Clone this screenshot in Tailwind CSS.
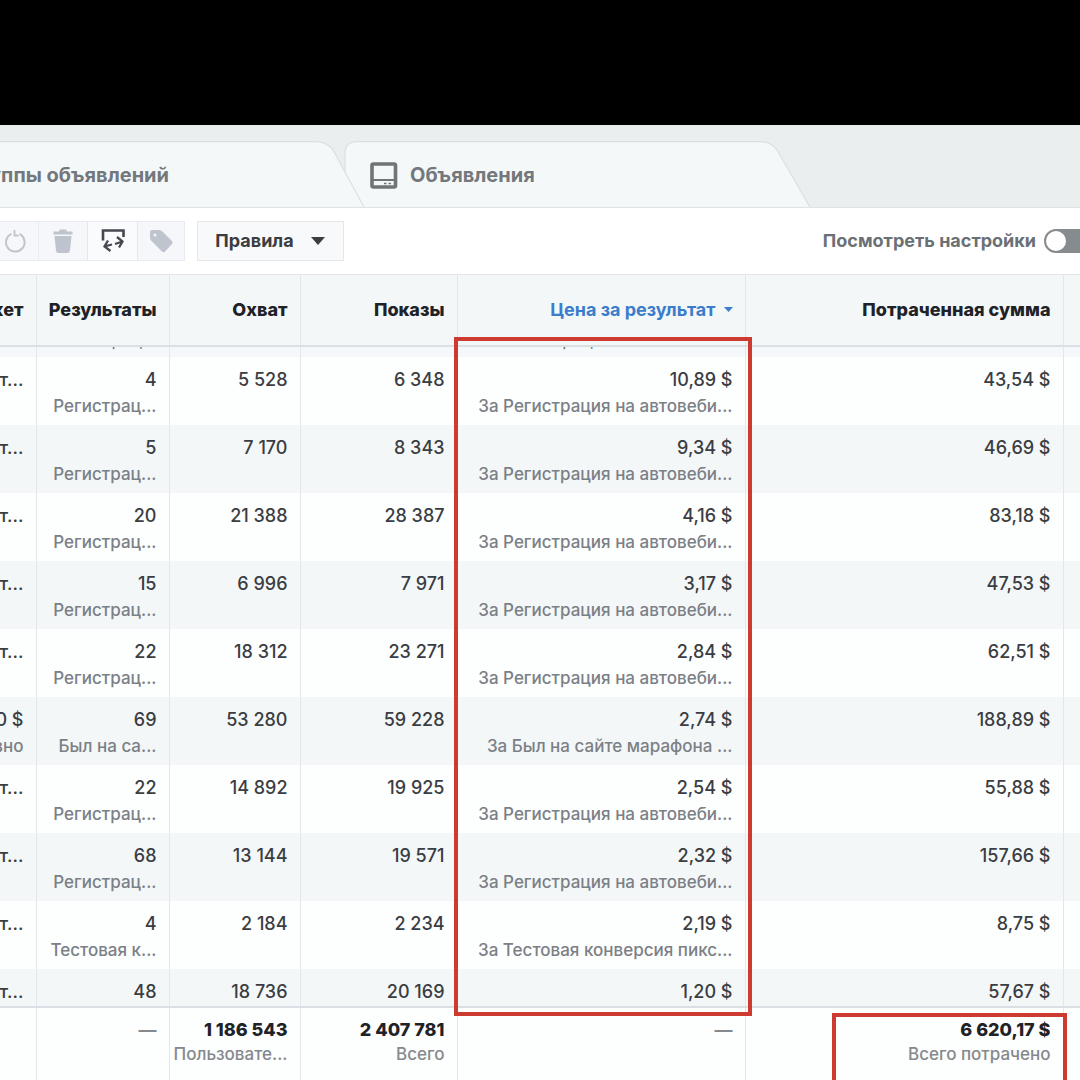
<!DOCTYPE html>
<html lang="ru">
<head>
<meta charset="utf-8">
<meta name="viewport" content="width=device-width, initial-scale=1">
<title>Ads Manager</title>
<script src="https://cdn.jsdelivr.net/npm/@tailwindcss/browser@4"></script>
</head>
<body class="min-h-screen overflow-hidden bg-white font-['Inter','Liberation_Sans',sans-serif] text-[#3a3d42]">
<div class="h-[125px] bg-black"></div>

<nav class="relative flex h-[83px] items-end border-b border-[#dfe3e6] bg-[#eaeeef]">
  <svg class="absolute bottom-0 left-0 h-[66px] w-[812px]" viewBox="0 0 812 66" fill="#f5f8f9" stroke="#dbdfe1" stroke-width="1.2" aria-hidden="true">
    <path d="M345 66V12Q345 .6 357 .6H760Q771 .6 777 9L810 66"/>
    <path d="M-2 66V.6H315Q327 .6 333 9L364 66"/>
  </svg>
  <a href="#" class="relative flex h-16 w-[370px] items-center"><span class="flex w-[169px] justify-end overflow-hidden text-xl font-bold whitespace-nowrap text-[#73787d]">Группы объявлений</span></a>
  <a href="#" class="relative flex h-16 items-center gap-3 text-xl font-bold text-[#73787d]">
    <svg class="h-7 w-7" viewBox="0 0 28 28" fill="none" stroke="#6f7477" stroke-width="3.600" aria-hidden="true"><rect x="2" y="3" width="23.500" height="23" rx="1.500"/><path d="M2 19H25" stroke-width="2"/><path d="M14 22.500H16.500M18.500 22.500H21" stroke-width="1.500"/></svg>
    Объявления
  </a>
</nav>

<div class="flex h-[66px] items-center justify-between overflow-hidden">
  <div class="flex items-center gap-3">
    <div class="flex h-10 border-y border-r border-[#e8ebef] bg-[#f5f7fa]">
      <button class="flex w-[38px] items-center justify-center pr-2" aria-label="Обновить"><svg class="h-7 w-7" viewBox="0 0 28 28" fill="none" stroke="#c0c4cd" stroke-width="2"><path d="M10.500 6.800A9.300 9.300 0 1 0 18.500 7"/><path d="M13.500 3V8.500H17.500" stroke-width="1.800"/></svg></button>
      <button class="flex w-[49px] items-center justify-center border-l border-[#e8ebef]" aria-label="Удалить"><svg class="h-7 w-7" viewBox="0 0 28 28" fill="#bfc3cd"><path d="M11 2.500H17L18 4.500H23.500V7.500H4.500V4.500H10ZM5.500 9H22.500L21 23.500Q20.800 26 18.500 26H9.500Q7.200 26 7 23.500Z"/></svg></button>
      <button class="flex w-[51px] items-center justify-center border-x border-[#e3e6ea] bg-[#fafbfc]" aria-label="Сравнить"><svg class="h-7 w-7" viewBox="0 0 28 28" fill="none" stroke="#45494f" stroke-width="2.600"><path d="M4 13.500V3.500H24.500V10"/><path d="M9 13.500L5.500 19.500L11.500 24M5.500 19.500L13 17.500M18 10L23.500 14.500L20 20.500M23.500 14.500L16 17" stroke-width="2.300"/></svg></button>
      <button class="flex w-[46px] items-center justify-center" aria-label="Метка"><svg class="h-7 w-7" viewBox="0 0 28 28"><path d="M3 5Q3 3 5 3H12Q14 3 15.500 4.500L25 14Q26.500 15.500 25 17L18 24.500Q16.500 26 15 24.500L5 14.500Q3 12.500 3 11Z" fill="#bfc4cf"/><circle cx="8" cy="8" r="1.500" fill="#f5f7fa"/></svg></button>
    </div>
    <button class="flex h-10 w-[147px] items-center justify-center gap-4 border border-[#e5e8eb] bg-[#f7f9fa] text-lg font-bold">Правила
      <svg class="h-2 w-4" viewBox="0 0 16 8" fill="#3a3d42" aria-hidden="true"><path d="M1 0H15L8 8Z"/></svg>
    </button>
  </div>
  <label class="-mr-3 flex items-center gap-2 text-lg font-bold text-[#6b7075]">Посмотреть настройки
    <input type="checkbox" role="switch" class="peer sr-only">
    <span class="flex h-6 w-12 items-center rounded-full border-2 border-[#868b8e] bg-[#868b8e]"><span class="h-5 w-5 rounded-full bg-white"></span></span>
  </label>
</div>

<div class="relative">
<table class="w-full table-fixed border-collapse text-right text-lg whitespace-nowrap">
  <colgroup><col class="w-[36px]"><col class="w-[133px]"><col class="w-[131px]"><col class="w-[157px]"><col class="w-[288px]"><col class="w-[318px]"><col></colgroup>
  <thead class="text-[#1f2227]">
    <tr id="head" class="h-[71px] border-t border-b-2 border-t-[#e2e6e9] border-b-[#dadfe4] bg-[#f4f7f8]"></tr>
  </thead>
  <tbody id="rows"></tbody>
  <tfoot id="totals" class="border-t-2 border-[#dadfe4] bg-[#fdfefe]"></tfoot>
</table>
<div class="pointer-events-none absolute top-[63px] left-[454px] h-[679px] w-[298px] border-4 border-[#cd3a30]"></div>
<div class="pointer-events-none absolute top-[739px] left-[832px] h-[72px] w-[235px] border-4 border-[#cd3a30]"></div>
</div>

<script>
const cell = 'border-r border-[#e3e7ec] p-0 pr-3 align-top';
const last = '<td class="p-0"></td>';
const line = (text, cls) => `<div class="flex justify-end overflow-hidden ${cls}"><span>${text}</span></div>`;

const heads = ['Бюджет', 'Результаты', 'Охват', 'Показы', 'Цена за результат', 'Потраченная сумма'];
document.getElementById('head').innerHTML = heads.map((h, i) => i === 4
  ? `<th scope="col" class="border-r border-[#e3e7ec] p-0 pr-3 font-bold text-[#3b7dcb]"><div class="flex items-center justify-end gap-2">${h}<svg class="h-[5px] w-[9px]" viewBox="0 0 9 5" fill="#3b7dcb"><path d="M0 0H9L4.500 5Z"/></svg></div></th>`
  : `<th scope="col" class="border-r border-[#e3e7ec] p-0 pr-3 font-extrabold">${line(h, '')}</th>`).join('') + '<th class="p-0"></th>';

const reg = 'Регистрац...', cost = 'За Регистрация на автовеби...', set = 'Использует...';
const data = [
  [set, '', '4', reg, '5 528', '6 348', '10,89 $', cost, '43,54 $'],
  [set, '', '5', reg, '7 170', '8 343', '9,34 $', cost, '46,69 $'],
  [set, '', '20', reg, '21 388', '28 387', '4,16 $', cost, '83,18 $'],
  [set, '', '15', reg, '6 996', '7 971', '3,17 $', cost, '47,53 $'],
  [set, '', '22', reg, '18 312', '23 271', '2,84 $', cost, '62,51 $'],
  ['10,00 $', 'Ежедневно', '69', 'Был на са...', '53 280', '59 228', '2,74 $', 'За Был на сайте марафона ...', '188,89 $'],
  [set, '', '22', reg, '14 892', '19 925', '2,54 $', cost, '55,88 $'],
  [set, '', '68', reg, '13 144', '19 571', '2,32 $', cost, '157,66 $'],
  [set, '', '4', 'Тестовая к...', '2 184', '2 234', '2,19 $', 'За Тестовая конверсия пикс...', '8,75 $'],
  [set, '', '48', '', '18 736', '20 169', '1,20 $', '', '57,67 $'],
];
const pair = (a, b) => `<td class="${cell}">${line(a, 'h-[26px] leading-[26px] font-medium')}${b ? line(b, 'h-[26px] text-[17px] leading-[26px] font-medium text-[#7b8086]') : ''}</td>`;
const clipped = t => `<td class="${cell}"><div class="flex h-[5px] items-end justify-end overflow-hidden text-[17px] leading-6 text-[#74797f]">${t}</div></td>`;
const partial = `<tr class="h-[11px] bg-[#f5f8fa]">${['', reg, '', '', cost, ''].map(clipped).join('')}${last}</tr>`;
document.getElementById('rows').innerHTML = partial + data.map((d, i) =>
  `<tr class="${i === 9 ? 'h-[38px]' : 'h-[68px]'} ${i % 2 ? 'bg-[#f3f7f8]' : 'bg-[#fdfefe]'}">${
    [[d[0], d[1]], [d[2], d[3]], [d[4]], [d[5]], [d[6], d[7]], [d[8]]].map(p => pair(p[0], p[1]).replace('p-0 pr-3', 'p-0 pt-[10px] pr-3')).join('')}${last}</tr>`).join('');

const totals = [['', ''], ['—', ''], ['1 186 543', 'Пользовате...'], ['2 407 781', 'Всего'], ['—', ''], ['6 620,17 $', 'Всего потрачено']];
document.getElementById('totals').innerHTML = `<tr class="h-[90px]">${totals.map(([a, b]) =>
  `<td class="${cell}">${line(a, 'h-6 leading-6 mt-[10px] ' + (a === '—' ? 'font-bold text-[#85898d]' : 'font-extrabold text-[#1f2227]'))}${b ? line(b, 'h-6 text-[17px] leading-6 font-medium text-[#85898d]') : ''}</td>`).join('')}${last}</tr>`;
</script>
</body>
</html>
